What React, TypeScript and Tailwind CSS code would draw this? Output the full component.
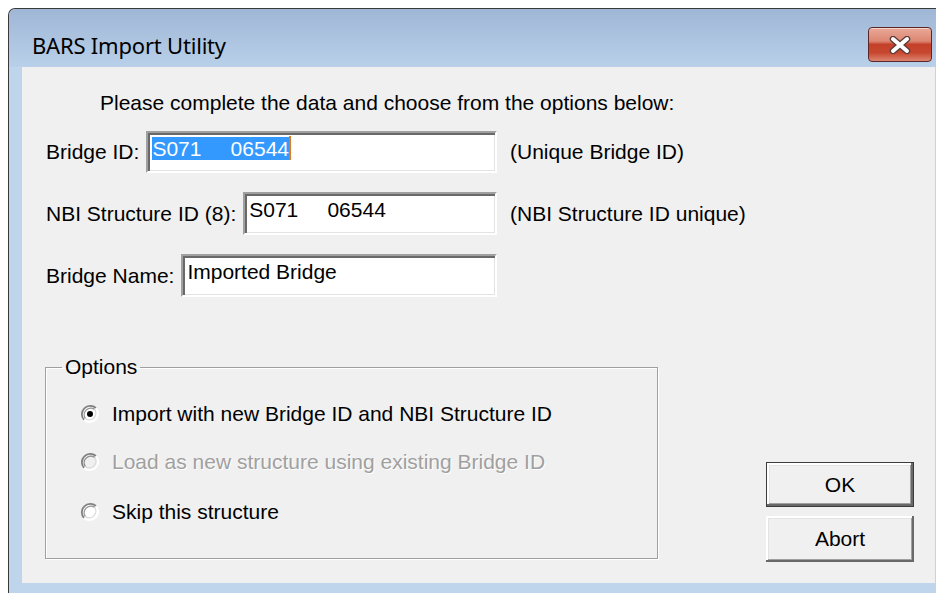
import React from 'react';

// classic 3D edges
const sunkenBox =
  'border-2 border-t-[#a0a0a0] border-l-[#a0a0a0] border-b-white border-r-white shadow-[inset_2px_2px_0_#696969,inset_-1px_-1px_0_#e3e3e3] bg-white';
const raisedBox =
  'bg-[#f0f0f0] shadow-[inset_-2px_-2px_0_#696969,inset_2px_2px_0_#ffffff,inset_-3px_-3px_0_#a0a0a0,inset_3px_3px_0_#e3e3e3]';

function CloseButton() {
  return (
    <div className="mt-[18px] mr-[4px] flex h-[35px] w-[64px] items-center justify-center rounded-[4px] border border-[#5b2626] bg-[linear-gradient(to_bottom,#e9a897_0%,#dc8672_40%,#c4402a_50%,#c8482f_75%,#dc8571_100%)] shadow-[inset_0_1px_0_rgba(255,255,255,0.5)]">
      <svg width="22" height="18" viewBox="0 0 22 18">
        <path d="M4 3 L18 15 M18 3 L4 15" stroke="#5a3a3a" strokeWidth="6.5" strokeLinecap="round" />
        <path d="M4 3 L18 15 M18 3 L4 15" stroke="#ffffff" strokeWidth="4" strokeLinecap="round" />
      </svg>
    </div>
  );
}

function Radio({ checked, disabled }: { checked?: boolean; disabled?: boolean }) {
  return (
    <svg width="20" height="20" viewBox="0 0 20 20" className="shrink-0">
      <circle cx="10" cy="10" r="8.5" fill={disabled ? '#f0f0f0' : '#ffffff'} />
      {/* outer ring: dark upper-left, light lower-right */}
      <path d="M4 16 A8.5 8.5 0 0 1 16 4" fill="none" stroke="#808080" strokeWidth="1.8" />
      <path d="M16 4 A8.5 8.5 0 0 1 4 16" fill="none" stroke="#ffffff" strokeWidth="1.8" />
      {/* inner ring */}
      <path d="M5.4 14.6 A6.6 6.6 0 0 1 14.6 5.4" fill="none" stroke="#404040" strokeWidth="1.4" opacity="0.55" />
      <path d="M14.6 5.4 A6.6 6.6 0 0 1 5.4 14.6" fill="none" stroke="#dcdcdc" strokeWidth="1.4" />
      {checked && <circle cx="10" cy="10" r="3" fill="#000000" />}
    </svg>
  );
}

function Field({
  label,
  hint,
  children,
  height,
}: {
  label: string;
  hint?: string;
  children: React.ReactNode;
  height: string;
}) {
  return (
    <div className={`flex items-center ${height}`}>
      <div className="flex h-full w-[451px] items-center gap-[7px]">
        <span className="whitespace-nowrap">{label}</span>
        <div className={`h-full flex-1 pl-[4px] pt-[3px] leading-[26px] whitespace-pre ${sunkenBox}`}>{children}</div>
      </div>
      {hint && <span className="ml-[13px] whitespace-nowrap">{hint}</span>}
    </div>
  );
}

export default function App() {
  return (
    <div className="h-[593px] w-[936px] overflow-hidden bg-white pl-[8px] pt-[8px] font-['Liberation_Sans',Arial,sans-serif] text-[21px] text-black">
      <div className="flex h-[585px] w-[928px] flex-col rounded-tl-[7px] border-l border-t border-[#3a3a3a] bg-[#bfd5ec]">
        {/* title bar */}
        <div className="flex h-[58px] justify-between rounded-tl-[7px] bg-[linear-gradient(to_bottom,#9fb7d5,#b9d0ea)]">
          <div className="pl-[23px] pt-[24px] font-['Noto_Sans',sans-serif] text-[22px] leading-[24px] tracking-[-0.2px] text-black">
            BARS Import Utility
          </div>
          <CloseButton />
        </div>

        {/* client area */}
        <div className="ml-[13px] h-[516px] w-[913px] bg-[#f0f0f0] pl-[24px] pt-[24px]">
          <div className="ml-[54px] h-[24px] leading-[24px]">
            Please complete the data and choose from the options below:
          </div>

          <div className="mt-[16px]">
            <Field label="Bridge ID:" hint="(Unique Bridge ID)" height="h-[42px]">
              <span className="relative bg-[#3399ff] text-white">{'S071     06544'}</span>
              <span className="inline-block h-[24px] w-[2px] bg-[#e07b20] align-top" />
            </Field>
          </div>
          <div className="mt-[19px]">
            <Field label="NBI Structure ID (8):" hint="(NBI Structure ID unique)" height="h-[43px]">
              {'S071     06544'}
            </Field>
          </div>
          <div className="mt-[19px]">
            <Field label="Bridge Name:" height="h-[43px]">
              Imported Bridge
            </Field>
          </div>

          <div className="mt-[58px] flex items-start">
            <fieldset className="ml-[-1px] h-[204px] w-[613px] border border-[#a0a0a0] shadow-[inset_1px_1px_0_#ffffff,1px_1px_0_#ffffff]">
              <legend className="ml-[16px] px-[3px] leading-[24px]">Options</legend>
              <div className="flex flex-col pl-[34px]">
                <label className="mt-[23px] flex h-[24px] items-center gap-[12px]">
                  <Radio checked />
                  <span>Import with new Bridge ID and NBI Structure ID</span>
                </label>
                <label className="mt-[24px] flex h-[24px] items-center gap-[12px]">
                  <Radio disabled />
                  <span className="text-[#a0a0a0] [text-shadow:1px_1px_0_#ffffff]">
                    Load as new structure using existing Bridge ID
                  </span>
                </label>
                <label className="mt-[26px] flex h-[24px] items-center gap-[12px]">
                  <Radio />
                  <span>Skip this structure</span>
                </label>
              </div>
            </fieldset>

            <div className="ml-[108px] mt-[107px] flex w-[148px] flex-col gap-[9px]">
              <div className="h-[45px] border border-[#3c3c3c]">
                <div className={`flex h-full items-center justify-center ${raisedBox}`}>OK</div>
              </div>
              <div className={`flex h-[46px] items-center justify-center ${raisedBox}`}>Abort</div>
            </div>
          </div>
        </div>
      </div>
    </div>
  );
}
